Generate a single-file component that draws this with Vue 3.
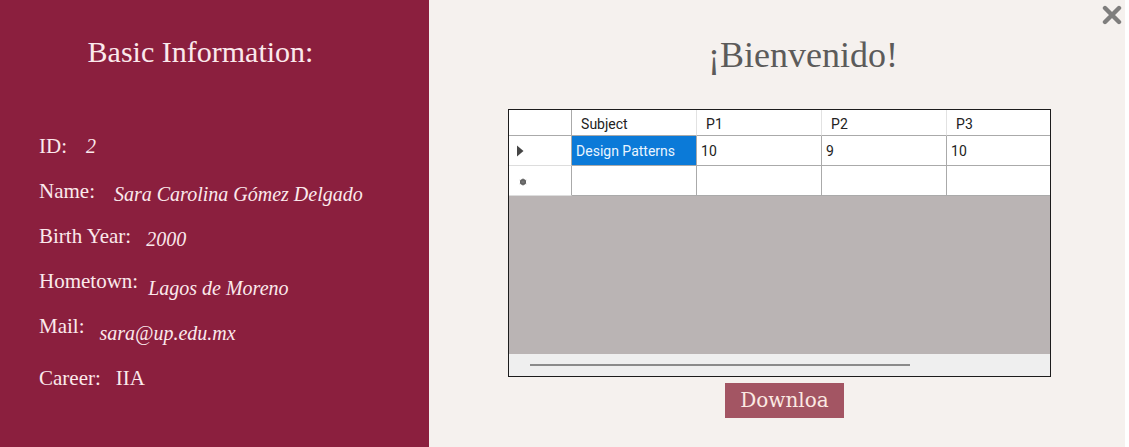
<script setup>
const details = [
  { label: 'ID:', value: '2', styles: 'wide' },
  { label: 'Name:', value: 'Sara Carolina Gómez Delgado', styles: 'wide low' },
  { label: 'Birth Year:', value: '2000', styles: 'low' },
  { label: 'Hometown:', value: 'Lagos de Moreno', styles: 'lower narrow' },
  { label: 'Mail:', value: 'sara@up.edu.mx', styles: 'lower' },
  { label: 'Career:', value: 'IIA', styles: 'upright' },
]
const columns = ['Subject', 'P1', 'P2', 'P3']
const grades = ['Design Patterns', '10', '9', '10']
</script>

<template>
  <main class="window">
    <aside class="info">
      <h1>Basic Information:</h1>
      <dl>
        <div v-for="item in details" :key="item.label" class="detail" :class="item.styles">
          <dt>{{ item.label }}</dt>
          <dd>{{ item.value }}</dd>
        </div>
      </dl>
    </aside>

    <section class="content">
      <button class="close" type="button" aria-label="Close">
        <svg viewBox="0 0 20 20" width="20" height="20" aria-hidden="true">
          <path d="M3 3L17 17M17 3L3 17" fill="none" stroke="#7f7e7d" stroke-width="4.4" stroke-linecap="round" />
        </svg>
      </button>

      <h2>¡Bienvenido!</h2>

      <div class="grid-box">
        <div class="grid-view">
          <table>
            <colgroup>
              <col class="col-marker" />
              <col v-for="name in columns" :key="name" class="col-data" />
            </colgroup>
            <thead>
              <tr>
                <td></td>
                <th v-for="name in columns" :key="name" scope="col">{{ name }}</th>
              </tr>
            </thead>
            <tbody>
              <tr>
                <td class="marker">
                  <svg viewBox="0 0 16 12" width="16" height="12" aria-hidden="true">
                    <path d="M1 0.5L7.5 6L1 11.5Z" fill="#454545" />
                  </svg>
                </td>
                <td v-for="(grade, i) in grades" :key="i" :class="{ selected: i === 0 }">{{ grade }}</td>
              </tr>
              <tr>
                <td class="marker">
                  <svg viewBox="0 0 16 12" width="16" height="12" aria-hidden="true">
                    <circle cx="7" cy="7" r="3" fill="#555" />
                    <path d="M7 3.4V10.6M3.8 5.2L10.2 8.8M10.2 5.2L3.8 8.8" stroke="#777" stroke-width="1" />
                  </svg>
                </td>
                <td v-for="name in columns" :key="name"></td>
              </tr>
            </tbody>
          </table>
        </div>
        <div class="scrollbar"><div class="thumb"></div></div>
      </div>

      <button class="download" type="button">Downloa</button>
    </section>
  </main>
</template>

<style>
body {
  margin: 0;
  background: #fff;
}
</style>

<style scoped>
.window {
  display: grid;
  grid-template-columns: 429fr 696fr;
  min-height: 100vh;
  padding-right: 4px;
  box-sizing: border-box;
  font-family: "Liberation Serif", "Times New Roman", serif;
}

.info {
  background: #8b1f3e;
  color: #fbe9ec;
}

h1 {
  margin: 0;
  padding: 36px 28px 0 0;
  font-size: 30px;
  line-height: 32px;
  font-weight: 400;
  text-align: center;
}

dl {
  margin: 66px 0 0;
  padding-left: 39px;
  font-size: 21px;
  line-height: 25px;
}

.detail {
  display: flex;
  gap: 15px;
  height: 45px;
}

.wide {
  gap: 19px;
}

.narrow {
  gap: 10px;
}

dd {
  margin: 0;
  font-size: 20px;
  font-style: italic;
}

.low dd {
  padding-top: 3px;
}

.lower dd {
  padding-top: 7px;
}

.upright {
  padding-top: 7px;
}

.upright dd {
  font-size: 21px;
  font-style: normal;
}

.content {
  position: relative;
  display: flex;
  flex-direction: column;
  align-items: center;
  background: #f5f1ee;
}

.close {
  position: absolute;
  top: 5px;
  right: 3px;
  display: flex;
  padding: 0;
  border: 0;
  background: none;
}

h2 {
  margin: 0;
  padding: 36px 0 0 52px;
  font-size: 36px;
  line-height: 38px;
  font-weight: 400;
  color: #5c5b5a;
}

.grid-box {
  width: 78%;
  height: 268px;
  margin: 35px 0 0 5px;
  box-sizing: border-box;
  display: flex;
  flex-direction: column;
  border: 1px solid #1c1c1c;
  background: #bab4b4;
}

.grid-view {
  flex: 1;
  overflow: hidden;
}

table {
  width: 563px;
  table-layout: fixed;
  border-collapse: separate;
  border-spacing: 0;
  background: #fff;
  font-family: Roboto, "Liberation Sans", sans-serif;
  font-size: 14px;
  line-height: 16px;
  color: #222;
}

.col-marker {
  width: 63px;
}

.col-data {
  width: 125px;
}

th,
td {
  height: 30px;
  box-sizing: border-box;
  padding: 0 4px;
  border-right: 1px solid #aaa;
  border-bottom: 1px solid #aaa;
  text-align: left;
  font-weight: 400;
}

thead th,
thead td {
  height: 26px;
  padding: 3px 9px 0;
}

thead th {
  border-right-color: #e2e2e2;
}

.marker {
  padding: 0 7px;
  border-bottom-color: #ddd;
}

.marker svg {
  display: block;
}

.selected {
  background: #0b7ad8;
  color: #e9f5ff;
}

.scrollbar {
  height: 22px;
  padding: 10px 140px 0 21px;
  box-sizing: border-box;
  background: #efefef;
}

.thumb {
  height: 2px;
  background: #8b8b8b;
}

.download {
  margin: 6px 0 0 15px;
  padding: 0 15px;
  height: 35px;
  border: 0;
  background: #a35563;
  color: #fbe9e2;
  font-family: "DejaVu Serif", serif;
  font-size: 20px;
  line-height: 35px;
}
</style>
